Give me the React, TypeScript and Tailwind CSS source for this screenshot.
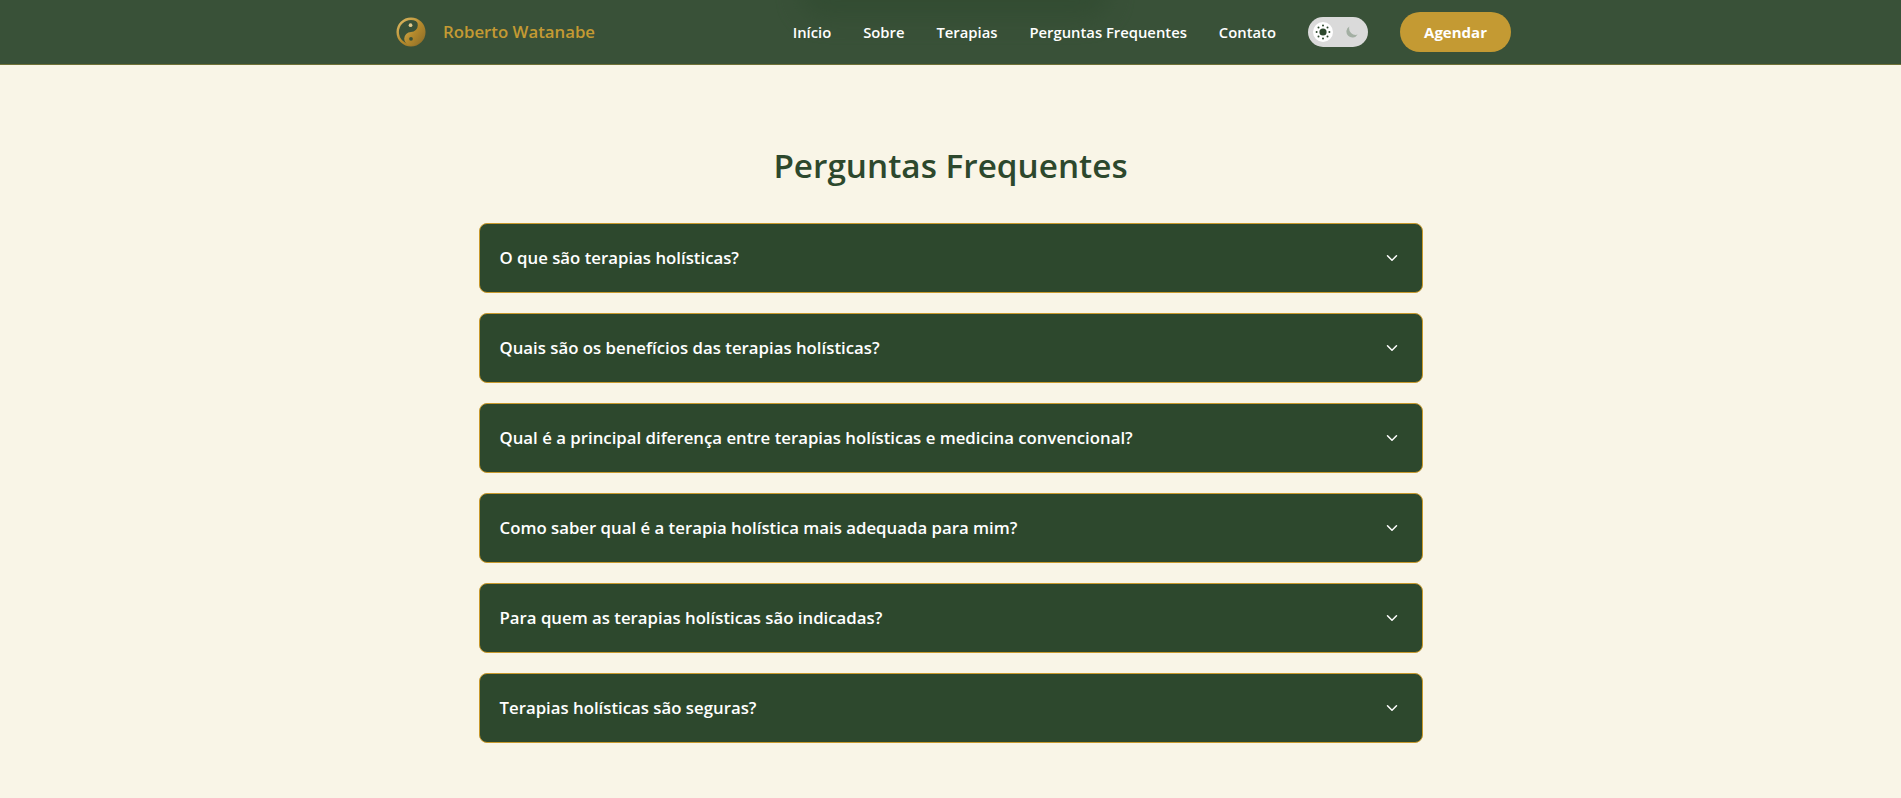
import { ChevronDown } from "lucide-react";

const navLinks = ["Início", "Sobre", "Terapias", "Perguntas Frequentes", "Contato"];

const faqItems = [
  "O que são terapias holísticas?",
  "Quais são os benefícios das terapias holísticas?",
  "Qual é a principal diferença entre terapias holísticas e medicina convencional?",
  "Como saber qual é a terapia holística mais adequada para mim?",
  "Para quem as terapias holísticas são indicadas?",
  "Terapias holísticas são seguras?",
];

function YinYangLogo() {
  return (
    <svg viewBox="0 0 32 32" className="h-[30px] w-[30px] shrink-0">
      <defs>
        <linearGradient id="gold" x1="0" y1="0" x2="1" y2="1">
          <stop offset="0" stopColor="#e0bd68" />
          <stop offset="0.5" stopColor="#b58a2c" />
          <stop offset="1" stopColor="#8a6b28" />
        </linearGradient>
      </defs>
      <circle cx="16" cy="16" r="14.2" fill="#395138" stroke="url(#gold)" strokeWidth="2.6" />
      <path
        d="M16 1.5a14.5 14.5 0 0 1 0 29a7.25 7.25 0 0 1 0-14.5a7.25 7.25 0 0 0 0-14.5z"
        fill="url(#gold)"
      />
      <circle cx="15.5" cy="8.7" r="2" fill="#e2c98c" />
      <circle cx="16" cy="23.2" r="2" fill="#395138" />
    </svg>
  );
}

function SunDots() {
  return (
    <svg viewBox="0 0 16 16" className="h-[16px] w-[16px] text-[#2d482d]" fill="currentColor">
      <circle cx="8" cy="8" r="3.6" />
      <circle cx="8" cy="1.6" r="1" />
      <circle cx="8" cy="14.4" r="1" />
      <circle cx="1.6" cy="8" r="1" />
      <circle cx="14.4" cy="8" r="1" />
      <circle cx="3.5" cy="3.5" r="1" />
      <circle cx="12.5" cy="3.5" r="1" />
      <circle cx="3.5" cy="12.5" r="1" />
      <circle cx="12.5" cy="12.5" r="1" />
    </svg>
  );
}

function MoonCrescent() {
  return (
    <svg viewBox="0 0 12 12" className="h-[12px] w-[12px]" fill="#a3afa3">
      <path d="M3.4 0.4a6 6 0 1 0 8.2 8.2a6.6 6.6 0 0 1-8.2-8.2z" />
    </svg>
  );
}

export default function App() {
  return (
    <div className="min-h-[798px] bg-[#f9f5e7] font-['Open_Sans','Noto_Sans',sans-serif]">
      <header className="relative h-[65px] overflow-hidden border-b border-[#6f7238] bg-[#395138]">
        {/* faint dark smudge behind the nav, top edge */}
        <div className="absolute left-[800px] top-[-30px] h-[48px] w-[310px] rounded-full bg-[#2d482d] opacity-50 blur-md" />
        <div className="relative ml-[396px] flex h-full w-[1115px] items-center justify-between">
          <div className="flex items-center gap-[17px]">
            <YinYangLogo />
            <span className="text-[16.8px] font-semibold text-[#c49a33]">Roberto Watanabe</span>
          </div>
          <nav className="flex items-center gap-8">
            {navLinks.map((link) => (
              <a key={link} className="text-[14.8px] font-semibold text-white">
                {link}
              </a>
            ))}
            <div className="flex h-[30px] w-[60px] items-center justify-between rounded-full bg-[#dadada] pl-[5px] pr-[10px]">
              <span className="flex h-[20px] w-[20px] items-center justify-center rounded-full bg-white">
                <SunDots />
              </span>
              <MoonCrescent />
            </div>
            <button className="h-[40px] w-[111px] rounded-full bg-[#c49a33] text-[15px] font-bold text-white">
              Agendar
            </button>
          </nav>
        </div>
      </header>

      <main className="mx-auto w-[944px] pt-[78px]">
        <h1 className="text-center text-[33.3px] font-semibold leading-[44px] text-[#2d482d]">
          Perguntas Frequentes
        </h1>
        <div className="mt-[36px] flex flex-col gap-[20px]">
          {faqItems.map((question) => (
            <div
              key={question}
              className="flex h-[70px] items-center justify-between rounded-lg border border-[#c8992c] bg-[#2d482d] pl-[20px] pr-[21px]"
            >
              <span className="text-[16.8px] font-semibold text-white">{question}</span>
              <ChevronDown size={18} strokeWidth={2} className="text-white" />
            </div>
          ))}
        </div>
      </main>
    </div>
  );
}
